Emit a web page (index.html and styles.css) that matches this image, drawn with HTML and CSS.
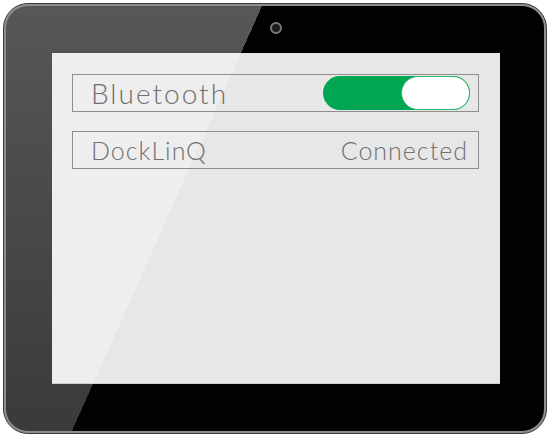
FILE: index.html
```html
<!DOCTYPE html>
<html>
<head>
<meta charset="utf-8">
<link rel="stylesheet" href="styles.css">
</head>
<body>
<div class="tablet">
  <div class="bezel">
    <span class="camera"></span>
    <div class="screen">
      <div class="row">
        <span class="label label-lg">Bluetooth</span>
        <span class="toggle"><span class="knob"></span></span>
      </div>
      <div class="row">
        <span class="label">DockLinQ</span>
        <span class="label status">Connected</span>
      </div>
    </div>
  </div>
</div>
</body>
</html>
```
FILE: styles.css
```css
html, body {
  margin: 0;
  padding: 0;
  background: #ffffff;
}
body {
  padding: 3px;
  font-family: Lato, "Open Sans", sans-serif;
}
.tablet {
  width: 538px;
  height: 425px;
  padding: 2px;
  border: 1px solid #3c3c3c;
  border-radius: 25px;
  background: #8e8e8e;
}
.bezel {
  position: relative;
  box-sizing: border-box;
  width: 538px;
  height: 425px;
  border-radius: 22px;
  padding: 47px 44px 47px 46px;
  background:
    linear-gradient(114.1deg, transparent 233.7px, #020202 233.7px),
    linear-gradient(180deg, #575757 0%, #3a3a3a 100%);
}
.camera {
  position: absolute;
  left: 264px;
  top: 16px;
  width: 8px;
  height: 8px;
  border: 2px solid #7a7a7a;
  border-radius: 50%;
  background: #1c1c1c;
}
.screen {
  box-sizing: border-box;
  width: 448px;
  height: 331px;
  padding: 21px 21px 0 20px;
  display: flex;
  flex-direction: column;
  gap: 19px;
  background: linear-gradient(114.1deg, #eeeeee 172.5px, #e7e7e7 172.5px);
  border-bottom: 1px solid #cfcfcf;
}
.row {
  box-sizing: border-box;
  height: 38px;
  border: 1px solid #8e8e8e;
  display: flex;
  align-items: center;
  justify-content: space-between;
  padding: 0 8px 0 18px;
}
.label {
  font-weight: 300;
  font-size: 25px;
  color: #707070;
  letter-spacing: 1px;
}
.label-lg {
  font-size: 28px;
  letter-spacing: 2px;
}
.status {
  margin-right: 2px;
}
.toggle {
  position: relative;
  display: flex;
  justify-content: flex-end;
  width: 147px;
  height: 34px;
  border-radius: 17px;
  background: #00a651;
}
.knob {
  box-sizing: border-box;
  width: 69px;
  height: 34px;
  border-radius: 17px;
  background: #ffffff;
  border: 1px solid #2fb86a;
}
```
